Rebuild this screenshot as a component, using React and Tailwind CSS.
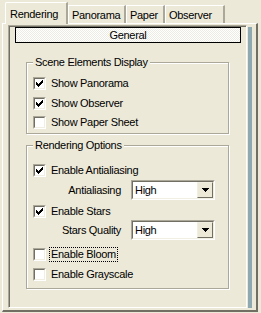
import React from 'react';

const font = { fontFamily: '"Liberation Sans", Arial, sans-serif' };

const Check = () => (
    <svg width="7" height="7" viewBox="0 0 7 7" shapeRendering="crispEdges" className="block">
        <rect x="6" y="0" width="1" height="1" fill="#000" />
        <rect x="5" y="1" width="2" height="1" fill="#000" />
        <rect x="0" y="2" width="1" height="1" fill="#000" />
        <rect x="4" y="2" width="3" height="1" fill="#000" />
        <rect x="0" y="3" width="2" height="1" fill="#000" />
        <rect x="3" y="3" width="3" height="1" fill="#000" />
        <rect x="0" y="4" width="5" height="1" fill="#000" />
        <rect x="1" y="5" width="3" height="1" fill="#000" />
        <rect x="2" y="6" width="1" height="1" fill="#000" />
    </svg>
);

const CheckBox = ({ checked, label, focused }) => (
    <div className="flex items-center h-[13px]">
        <div className="w-[13px] h-[13px] border border-t-[#ACA899] border-l-[#ACA899] border-r-white border-b-white">
            <div className="w-[11px] h-[11px] bg-white border border-t-[#716F64] border-l-[#716F64] border-r-[#F1EFE2] border-b-[#F1EFE2] flex items-center justify-center">
                {checked && <Check />}
            </div>
        </div>
        <span
            className={`ml-[4px] px-[1px] leading-[13px] ${focused ? 'outline outline-1 outline-dotted outline-black' : ''}`}
        >
            {label}
        </span>
    </div>
);

const Select = ({ value }) => (
    <div className="w-[84px] h-[20px] bg-white flex border border-t-[#ACA899] border-l-[#ACA899] border-r-white border-b-white">
        <div className="flex-1 flex border border-t-[#716F64] border-l-[#716F64] border-r-[#F1EFE2] border-b-[#F1EFE2]">
            <span className="flex-1 pl-[2px] leading-[16px]">{value}</span>
            <div className="w-[16px] h-[16px] bg-[#ECE9D8] border border-t-[#F1EFE2] border-l-[#F1EFE2] border-r-[#716F64] border-b-[#716F64] flex items-center justify-center">
                <svg width="7" height="4" viewBox="0 0 7 4" shapeRendering="crispEdges">
                    <path d="M0 0h7v1H0zM1 1h5v1H1zM2 2h3v1H2zM3 3h1v1H3z" fill="#000" />
                </svg>
            </div>
        </div>
    </div>
);

const GroupBox = ({ title, className, children }) => (
    <div
        className={`relative ml-[11px] w-[203px] border border-[#ACA899] shadow-[inset_1px_1px_0_#fff,1px_1px_0_#fff] ${className}`}
    >
        <span className="absolute -top-[7px] left-[6px] px-[2px] bg-[#ECE9D8] leading-[13px]">{title}</span>
        {children}
    </div>
);

const Tab = ({ label, active, className }) => (
    <div
        className={`relative border-t border-l border-t-white border-l-white border-r-2 border-r-[#ACA899] ${
            active ? 'h-[22px] -mb-px z-10 bg-[#ECE9D8] px-[4px] pt-[3px]' : 'h-[18px] px-[3px] pt-[1px]'
        } ${className}`}
    >
        <span className="leading-[13px]">{label}</span>
    </div>
);

export default function App() {
    return (
        <div
            className="w-[261px] h-[313px] bg-[#ECE9D8] text-[11px] tracking-[-0.3px] text-black overflow-hidden pt-[2px]"
            style={font}
        >
            {/* Tabs */}
            <div className="flex items-end h-[21px] pl-[5px]">
                <Tab label="Rendering" active className="w-[63px] rounded-tl-[2px]" />
                <Tab label="Panorama" className="w-[58px]" />
                <Tab label="Paper" className="w-[39px]" />
                <Tab label="Observer" className="w-[60px]" />
            </div>

            {/* Tab panel */}
            <div className="ml-[2px] w-[256px] h-[289px] border-t border-l border-t-white border-l-white border-r-2 border-b-2 border-r-[#716F64] border-b-[#716F64] flex pt-[1px] pl-[5px] pr-[4px] pb-[2px]">
                <div className="flex-1 border border-t-[#ACA899] border-l-[#ACA899] border-r-white border-b-white">
                    <div className="h-full border-t border-l border-t-[#716F64] border-l-[#716F64] pl-[5px] pr-[5px]">
                        {/* Header */}
                        <div className="h-[16px] border border-black bg-[repeating-conic-gradient(#ffffff_0_25%,#ecebe4_0_50%)] bg-[length:2px_2px] flex items-center justify-center">
                            <span className="leading-[13px]">General</span>
                        </div>

                        <GroupBox title="Scene Elements Display" className="mt-[19px] h-[72px] pt-[14px] pl-[6px]">
                            <div className="flex flex-col gap-[6px]">
                                <CheckBox checked label="Show Panorama" />
                                <div className="mt-[1px]">
                                    <CheckBox checked label="Show Observer" />
                                </div>
                                <CheckBox label="Show Paper Sheet" />
                            </div>
                        </GroupBox>

                        <GroupBox title="Rendering Options" className="mt-[11px] h-[144px] pt-[18px] pl-[6px]">
                            <CheckBox checked label="Enable Antialiasing" />
                            <div className="flex items-center mt-[3px] h-[20px]">
                                <span className="w-[98px] text-right pr-[10px] leading-[13px]">Antialiasing</span>
                                <Select value="High" />
                            </div>
                            <div className="mt-[5px]">
                                <CheckBox checked label="Enable Stars" />
                            </div>
                            <div className="flex items-center mt-[2px] h-[20px]">
                                <span className="w-[98px] text-right pr-[10px] leading-[13px]">Stars Quality</span>
                                <Select value="High" />
                            </div>
                            <div className="mt-[8px]">
                                <CheckBox label="Enable Bloom" focused />
                            </div>
                            <div className="mt-[7px]">
                                <CheckBox label="Enable Grayscale" />
                            </div>
                        </GroupBox>
                    </div>
                </div>
                <div className="w-[4px] ml-[1px] mt-[2px] bg-[#8FA9B0]" />
            </div>
        </div>
    );
}
